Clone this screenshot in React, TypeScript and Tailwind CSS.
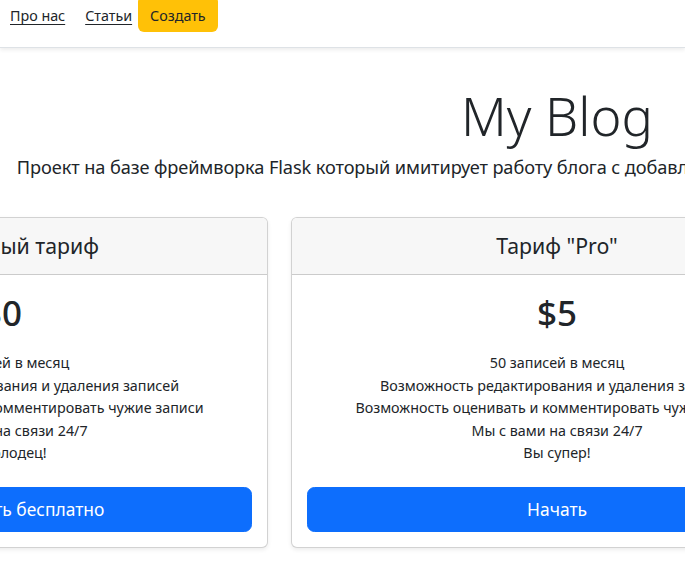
import React from "react";

const plans = [
  {
    title: "Бесплатный тариф",
    price: "$0",
    items: [
      "10 записей в месяц",
      "Возможность редактирования и удаления записей",
      "Возможность оценивать и комментировать чужие записи",
      "Мы с вами на связи 24/7",
      "Вы молодец!",
    ],
    button: "Попробовать бесплатно",
  },
  {
    title: 'Тариф "Pro"',
    price: "$5",
    items: [
      "50 записей в месяц",
      "Возможность редактирования и удаления записей",
      "Возможность оценивать и комментировать чужие записи",
      "Мы с вами на связи 24/7",
      "Вы супер!",
    ],
    button: "Начать",
  },
  {
    title: 'Тариф "Enterprise"',
    price: "$15",
    items: [
      "Неограниченное число записей",
      "Возможность редактирования и удаления записей",
      "Возможность оценивать и комментировать чужие записи",
      "Мы с вами на связи 24/7",
      "Вы лучший!",
    ],
    button: "Связаться с нами",
  },
];

export default function App() {
  return (
    <div className="w-[685px] h-[566px] overflow-hidden bg-white text-[#212529] font-['Noto_Sans',sans-serif] text-[14.3px] leading-[1.5]">
      <header className="h-[48px] border-b border-[#dee2e6] shadow-[0_2px_4px_rgba(0,0,0,0.075)]">
        <nav className="flex items-end h-[32px] pl-[10px]">
          <a href="#" className="self-center underline underline-offset-[3px] mr-[20px]">
            Про нас
          </a>
          <a href="#" className="self-center underline underline-offset-[3px] mr-[6px]">
            Статьи
          </a>
          <button className="h-[36px] -mt-[4px] pt-[4px] px-[12px] flex items-center bg-[#ffc107] rounded-[6px] text-[#212529]">
            Создать
          </button>
        </nav>
      </header>

      <main className="ml-[-264px] w-[1642px] text-center">
        <div className="pt-[36px]">
          <h1 className="text-[52.5px] leading-[1.2] font-light mb-[6px]">My Blog</h1>
          <p className="text-[18.2px] leading-[28px] tracking-[-0.1px]">
            Проект на базе фреймворка Flask который имитирует работу блога с добавлением, редактированием и удалением постов.
          </p>
        </div>

        <div className="grid grid-cols-3 gap-x-[23px] mt-[36px]">
          {plans.map((p) => (
            <div
              key={p.title}
              className="flex flex-col border border-[rgba(0,0,0,0.175)] rounded-[6px] shadow-[0_2px_4px_rgba(0,0,0,0.075)] bg-white overflow-hidden"
            >
              <div className="h-[57px] flex items-center justify-center bg-[#f7f7f7] border-b border-[rgba(0,0,0,0.175)]">
                <h4 className="text-[21.3px] leading-[1.2] font-normal">{p.title}</h4>
              </div>
              <div className="p-[15px]">
                <div className="h-[45px] flex items-center justify-center text-[35px] leading-[1.2] font-medium">
                  {p.price}
                </div>
                <ul className="mt-[17px] mb-[22px]">
                  {p.items.map((it) => (
                    <li key={it} className="leading-[22.5px]">
                      {it}
                    </li>
                  ))}
                </ul>
                <button className="w-full h-[45px] text-[17.4px] leading-[1.5] text-white bg-[#0d6efd] border border-[#0d6efd] rounded-[7.5px]">
                  {p.button}
                </button>
              </div>
            </div>
          ))}
        </div>
      </main>
    </div>
  );
}
